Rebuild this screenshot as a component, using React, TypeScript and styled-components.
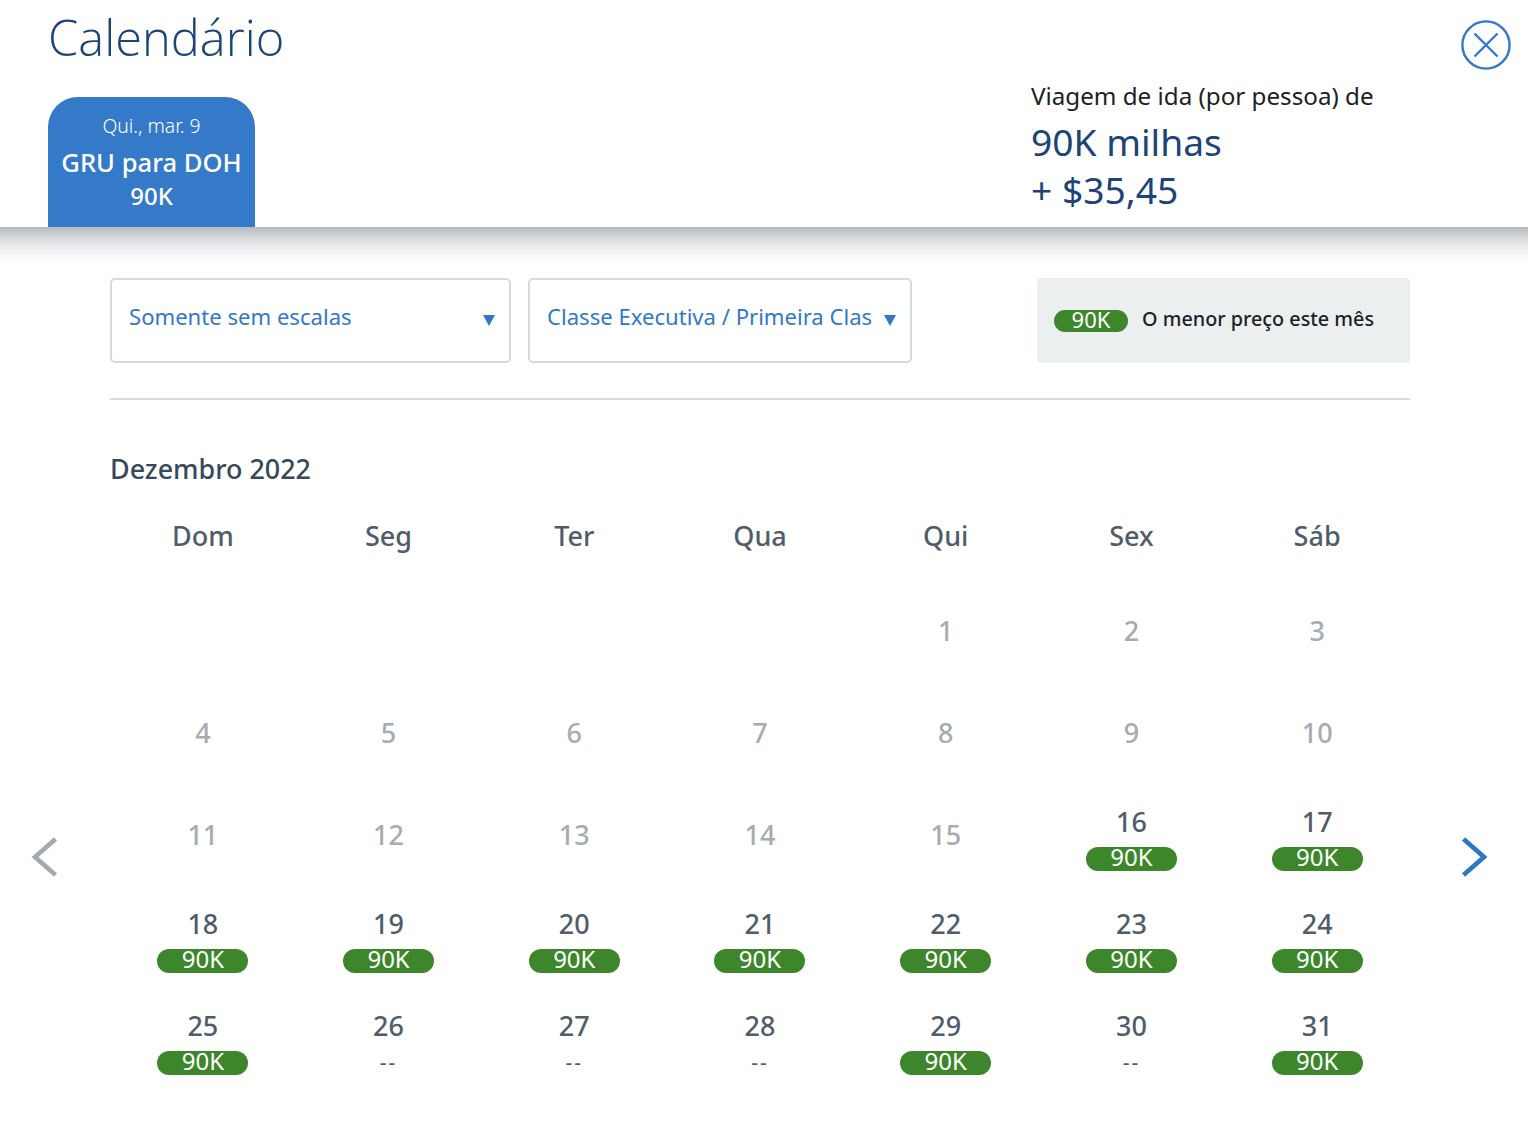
import styled, { createGlobalStyle } from 'styled-components'

const GlobalStyle = createGlobalStyle`
  html, body {
    margin: 0;
    padding: 0;
    background: #fff;
    font-family: "Noto Sans", "Open Sans", sans-serif;
  }
`

const WEEKDAYS = ['Dom', 'Seg', 'Ter', 'Qua', 'Qui', 'Sex', 'Sáb']

type Day = { day?: number; price?: string; muted?: boolean }

const past = (day: number): Day => ({ day, muted: true })
const fare = (day: number): Day => ({ day, price: '90K' })
const none = (day: number): Day => ({ day, price: '--' })

const DAYS: Day[] = [
  {}, {}, {}, {},
  past(1), past(2), past(3),
  past(4), past(5), past(6), past(7), past(8), past(9), past(10),
  past(11), past(12), past(13), past(14), past(15), fare(16), fare(17),
  fare(18), fare(19), fare(20), fare(21), fare(22), fare(23), fare(24),
  fare(25), none(26), none(27), none(28), fare(29), none(30), fare(31),
]

const App = () => (
  <Page>
    <GlobalStyle />
    <Header>
      <HeaderLeft>
        <Title>Calendário</Title>
        <Tab>
          <TabDate>Qui., mar. 9</TabDate>
          <TabRoute>GRU para DOH</TabRoute>
          <TabPrice>90K</TabPrice>
        </Tab>
      </HeaderLeft>
      <Summary>
        <SummaryLabel>Viagem de ida (por pessoa) de</SummaryLabel>
        <SummaryPrice>90K milhas</SummaryPrice>
        <SummaryPrice>+ $35,45</SummaryPrice>
      </Summary>
      <CloseButton aria-label="Fechar">
        <svg width="50" height="50" viewBox="0 0 50 50" fill="none" stroke="#3478c8">
          <circle cx="25" cy="25" r="23.6" strokeWidth="2.4" />
          <path d="M13.5 13.5 36.5 36.5M36.5 13.5 13.5 36.5" strokeWidth="2.4" />
        </svg>
      </CloseButton>
    </Header>
    <Shade />
    <Body>
      <NavColumn $width={110} $inset={30}>
        <NavButton aria-label="Mês anterior">
          <svg width="28" height="42" viewBox="0 0 28 42" fill="none" stroke="#a2a9b0" strokeWidth="4.6">
            <path d="M25.5 3 5 21 25.5 39" />
          </svg>
        </NavButton>
      </NavColumn>
      <Main>
        <Filters>
          <Select $width={401}>
            <SelectText>Somente sem escalas</SelectText>
            <Caret />
          </Select>
          <Select $width={384}>
            <SelectText>Classe Executiva / Primeira Clas</SelectText>
            <Caret />
          </Select>
          <Legend>
            <LegendPill>90K</LegendPill>
            <LegendText>O menor preço este mês</LegendText>
          </Legend>
        </Filters>
        <Rule />
        <Month>Dezembro 2022</Month>
        <Weekdays>
          {WEEKDAYS.map((name) => (
            <Weekday key={name}>{name}</Weekday>
          ))}
        </Weekdays>
        <Grid>
          {DAYS.map((item, index) => (
            <Cell key={index}>
              {item.day && <DayNumber $muted={item.muted}>{item.day}</DayNumber>}
              {item.price === '90K' && <Pill>90K</Pill>}
              {item.price === '--' && <NoFare>--</NoFare>}
            </Cell>
          ))}
        </Grid>
      </Main>
      <NavColumn $width={118} $inset={51}>
        <NavButton aria-label="Próximo mês">
          <svg width="28" height="42" viewBox="0 0 28 42" fill="none" stroke="#2f76c8" strokeWidth="4.6">
            <path d="M2.5 3 23 21 2.5 39" />
          </svg>
        </NavButton>
      </NavColumn>
    </Body>
  </Page>
)

export default App

const Page = styled.div`
  width: 1528px;
  height: 1122px;
  overflow: hidden;
  background: #fff;
`

const Header = styled.header`
  display: flex;
  height: 227px;
  box-sizing: border-box;
  background: #fff;
`

const HeaderLeft = styled.div`
  display: flex;
  flex-direction: column;
  align-items: flex-start;
  justify-content: space-between;
  width: 1031px;
  padding-left: 48px;
  box-sizing: border-box;
`

const Title = styled.h1`
  margin: 9px 0 0 0;
  color: #1c4476;
  font-family: "Open Sans", sans-serif;
  font-size: 48.8px;
  line-height: 56px;
  font-weight: 300;
`

const Tab = styled.div`
  display: flex;
  flex-direction: column;
  align-items: center;
  width: 207px;
  height: 130px;
  box-sizing: border-box;
  padding-top: 17px;
  border-radius: 30px 30px 0 0;
  background: #3579c9;
  color: #fff;
`

const TabDate = styled.div`
  font-size: 19.4px;
  line-height: 24px;
  font-weight: 300;
`

const TabRoute = styled.div`
  margin-top: 9px;
  font-size: 25.6px;
  line-height: 32px;
  font-weight: 500;
`

const TabPrice = styled.div`
  margin-top: -1px;
  font-size: 24px;
  line-height: 35px;
  font-weight: 500;
`

const Summary = styled.div`
  width: 430px;
  padding-top: 80px;
`

const SummaryLabel = styled.div`
  margin-bottom: 6px;
  color: #1d2125;
  font-size: 24.2px;
  line-height: 32px;
`

const SummaryPrice = styled.div`
  color: #1c4476;
  font-size: 37.2px;
  line-height: 48px;
`

const CloseButton = styled.button`
  align-self: flex-start;
  width: 50px;
  height: 50px;
  margin: 20px 0 0 0;
  padding: 0;
  border: 0;
  background: none;
`

const Shade = styled.div`
  height: 38px;
  margin-bottom: -38px;
  background: linear-gradient(#b6babd, #d9dbdd 30%, #f3f4f4 65%, #fff);
`

const Body = styled.div`
  display: flex;
`

const NavColumn = styled.div<{ $width: number; $inset: number }>`
  flex: 0 0 ${({ $width }) => $width}px;
  box-sizing: border-box;
  padding: 609px 0 0 ${({ $inset }) => $inset}px;
`

const NavButton = styled.button`
  width: 28px;
  height: 42px;
  padding: 0;
  border: 0;
  background: none;
`

const Main = styled.main`
  flex: 0 0 1300px;
  padding-top: 51px;
`

const Filters = styled.div`
  display: flex;
  align-items: stretch;
  height: 85px;
`

const Select = styled.div<{ $width: number }>`
  display: flex;
  align-items: flex-start;
  justify-content: space-between;
  width: ${({ $width }) => $width}px;
  margin-right: 17px;
  box-sizing: border-box;
  padding: 21px 14px 0 17px;
  border: 2px solid #d3dbe0;
  border-radius: 5px;
  background: #fff;
`

const SelectText = styled.span`
  color: #3378c8;
  font-size: 22.1px;
  line-height: 30px;
`

const Caret = styled.span`
  width: 0;
  height: 0;
  margin-top: 14px;
  border-left: 6.5px solid transparent;
  border-right: 6.5px solid transparent;
  border-top: 11px solid #3378c8;
`

const Legend = styled.div`
  display: flex;
  align-items: center;
  width: 373px;
  margin-left: auto;
  box-sizing: border-box;
  padding-left: 17px;
  border-radius: 4px;
  background: #eceff0;
`

const LegendPill = styled.span`
  width: 74px;
  height: 22px;
  margin-right: 14px;
  border-radius: 11px;
  background: #3d862c;
  color: #fff;
  text-align: center;
  font-size: 22px;
  line-height: 18px;
`

const LegendText = styled.span`
  margin-bottom: 5px;
  color: #1d2125;
  font-size: 19.8px;
  font-weight: 500;
`

const Rule = styled.hr`
  height: 2px;
  margin: 35px 0 0 0;
  border: 0;
  background: #d3dbe0;
`

const Month = styled.h2`
  margin: 51px 0 0 0;
  color: #36495a;
  font-size: 26.9px;
  line-height: 36px;
  font-weight: 500;
`

const Weekdays = styled.div`
  display: grid;
  grid-template-columns: repeat(7, 1fr);
  margin-top: 31px;
`

const Weekday = styled.div`
  color: #4f5d6b;
  text-align: center;
  font-size: 27px;
  line-height: 36px;
  font-weight: 500;
`

const Grid = styled.div`
  display: grid;
  grid-template-columns: repeat(7, 1fr);
  grid-auto-rows: 102px;
  margin-top: 26px;
`

const Cell = styled.div`
  display: flex;
  flex-direction: column;
  align-items: center;
`

const DayNumber = styled.div<{ $muted?: boolean }>`
  margin-top: ${({ $muted }) => ($muted ? 33 : 20)}px;
  margin-bottom: 7px;
  color: ${({ $muted }) => ($muted ? '#a5acb3' : '#4f5d6b')};
  font-size: 27px;
  line-height: 36px;
  font-weight: 500;
`

const Pill = styled.div`
  width: 91px;
  height: 24px;
  border-radius: 12px;
  background: #3d862c;
  color: #fff;
  text-align: center;
  font-size: 24px;
  line-height: 20px;
`

const NoFare = styled.div`
  height: 24px;
  color: #4f5d6b;
  font-size: 21px;
  line-height: 22px;
  letter-spacing: 2px;
`
